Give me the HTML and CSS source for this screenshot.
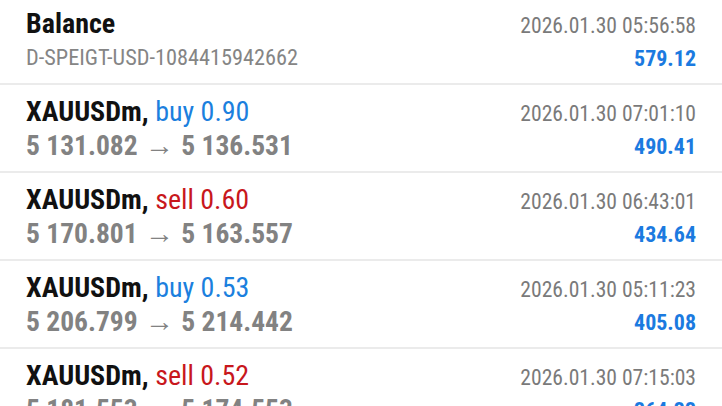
FILE: index.html
```html
<!DOCTYPE html>
<html lang="en">
<head>
  <meta charset="UTF-8">
  <meta name="viewport" content="width=device-width, initial-scale=1.0">
  <title>History</title>
  <link rel="stylesheet" href="styles.css">
</head>
<body>
  <ul class="deals">
    <li class="deal">
      <div class="deal-left">
        <div class="deal-title">Balance</div>
        <div class="deal-sub">D-SPEIGT-USD-1084415942662</div>
      </div>
      <div class="deal-right">
        <div class="deal-time">2026.01.30 05:56:58</div>
        <div class="deal-profit">579.12</div>
      </div>
    </li>
    <li class="deal">
      <div class="deal-left">
        <div class="deal-title">XAUUSDm, <span class="buy">buy 0.90</span></div>
        <div class="deal-prices">5 131.082 <span class="arrow">&rarr;</span> 5 136.531</div>
      </div>
      <div class="deal-right">
        <div class="deal-time">2026.01.30 07:01:10</div>
        <div class="deal-profit">490.41</div>
      </div>
    </li>
    <li class="deal">
      <div class="deal-left">
        <div class="deal-title">XAUUSDm, <span class="sell">sell 0.60</span></div>
        <div class="deal-prices">5 170.801 <span class="arrow">&rarr;</span> 5 163.557</div>
      </div>
      <div class="deal-right">
        <div class="deal-time">2026.01.30 06:43:01</div>
        <div class="deal-profit">434.64</div>
      </div>
    </li>
    <li class="deal">
      <div class="deal-left">
        <div class="deal-title">XAUUSDm, <span class="buy">buy 0.53</span></div>
        <div class="deal-prices">5 206.799 <span class="arrow">&rarr;</span> 5 214.442</div>
      </div>
      <div class="deal-right">
        <div class="deal-time">2026.01.30 05:11:23</div>
        <div class="deal-profit">405.08</div>
      </div>
    </li>
    <li class="deal">
      <div class="deal-left">
        <div class="deal-title">XAUUSDm, <span class="sell">sell 0.52</span></div>
        <div class="deal-prices">5 181.553 <span class="arrow">&rarr;</span> 5 174.553</div>
      </div>
      <div class="deal-right">
        <div class="deal-time">2026.01.30 07:15:03</div>
        <div class="deal-profit">364.33</div>
      </div>
    </li>
  </ul>
</body>
</html>
```

FILE: styles.css
```css
body {
  margin: 0;
  padding: 0;
  background: #fff;
  font-family: "Roboto Condensed", Roboto, sans-serif;
  font-stretch: condensed;
  overflow: hidden;
}

.deals {
  list-style: none;
  margin: -3px 0 0;
  padding: 0;
}

.deal {
  display: flex;
  justify-content: space-between;
  height: 86px;
  box-sizing: content-box;
  padding: 0 26px;
  border-bottom: 2px solid #ebebeb;
}

.deal-left {
  padding-top: 11px;
}

.deal-title {
  font-size: 28px;
  line-height: 32px;
  font-weight: bold;
  color: #111;
}

.deal-title .buy,
.deal-title .sell {
  font-weight: normal;
}

.buy {
  color: #1b80de;
}

.sell {
  color: #c8171c;
}

.deal-sub {
  font-size: 22.3px;
  line-height: 35px;
  color: #858585;
}

.deal-prices {
  font-size: 27.5px;
  line-height: 35px;
  font-weight: bold;
  color: #828282;
}

.deal-prices .arrow {
  display: inline-block;
  margin: 0 1px;
  font-family: Roboto, sans-serif;
  font-stretch: normal;
  font-weight: normal;
  font-size: 29px;
  line-height: 0;
}

.deal-right {
  padding-top: 13px;
  text-align: right;
}

.deal-time {
  font-size: 21.6px;
  line-height: 32px;
  color: #7a7a7a;
}

.deal-profit {
  font-size: 22px;
  line-height: 33px;
  font-weight: bold;
  color: #1b7ae0;
}
```
